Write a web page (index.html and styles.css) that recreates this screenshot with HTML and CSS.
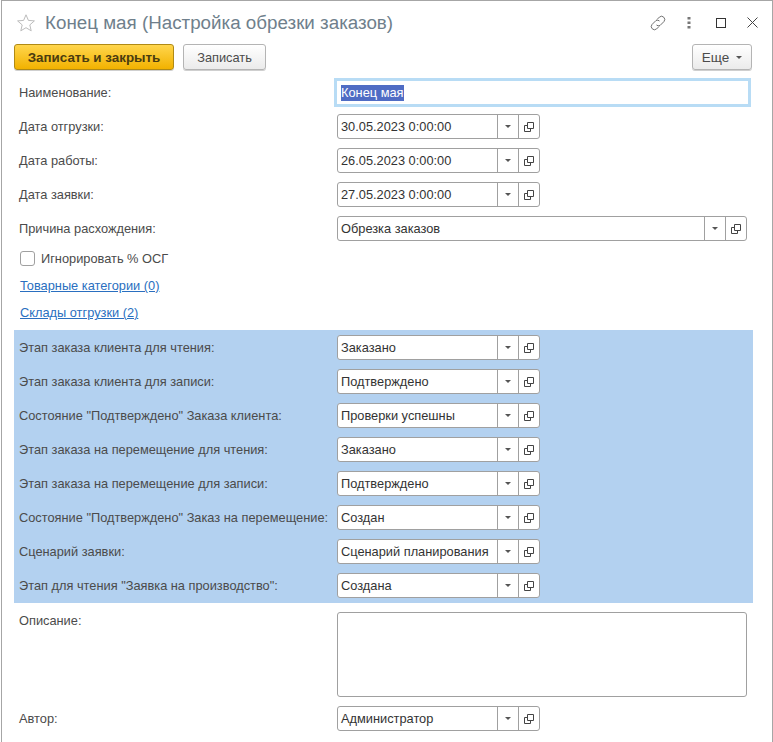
FILE: index.html
```html
<!DOCTYPE html>
<html lang="en">
<head>
    <meta charset="UTF-8">
    <title>Конец мая</title>
    <link rel="stylesheet" href="styles.css">
</head>
<body>
<svg class="defs" width="0" height="0">
    <symbol id="open" viewBox="0 0 10 10"><path d="M3.500.5h6v6h-6zM3.500 3.500h-3v6h6v-3" fill="none" stroke="#444"/></symbol>
</svg>
<div class="window">
    <div class="titlebar">
        <svg class="star" width="20" height="20" viewBox="0 0 20 20"><path d="M10 1.800l2.400 5.600 6 .5-4.600 4 1.400 5.900L10 14.700l-5.200 3.100 1.400-5.900-4.600-4 6-.5z" fill="none" stroke="#bcbcbc"/></svg>
        <span class="title">Конец мая (Настройка обрезки заказов)</span>
        <div class="winbtns">
            <svg class="ic-link" width="18" height="18" viewBox="0 0 18 18"><g fill="none" stroke="#707070"><path d="M8 5.500L10.500 3A3.200 3.200 0 0 1 15 7.500l-4 4a3.200 3.200 0 0 1-3.500-.5"/><path d="M10 12.500L7.500 15A3.200 3.200 0 0 1 3 10.500l4-4a3.200 3.200 0 0 1 3.500.5"/></g></svg>
            <svg class="ic-more" width="4" height="12" viewBox="0 0 4 12"><g fill="#777"><rect x="0.500" y="0" width="3" height="2.500"/><rect x="0.500" y="4.500" width="3" height="2.500"/><rect x="0.500" y="9" width="3" height="2.500"/></g></svg>
            <span class="ic-max"></span>
            <svg class="ic-close" width="11" height="11" viewBox="0 0 11 11"><path d="M.5.5l10 10M10.500.5l-10 10" stroke="#444" fill="none"/></svg>
        </div>
    </div>

    <div class="toolbar">
        <button class="btn btn-primary">Записать и закрыть</button>
        <button class="btn btn-save">Записать</button>
        <button class="btn btn-more">Еще<i class="caret"></i></button>
    </div>

    <div class="row row-name">
        <label>Наименование:</label>
        <div class="name-input"><span class="selected">Конец мая</span></div>
    </div>

    <div class="row"><label>Дата отгрузки:</label><div class="field"><span class="val">30.05.2023 0:00:00</span><span class="fbtn"><i class="caret"></i></span><span class="fbtn"><svg width="10" height="10"><use href="#open"/></svg></span></div></div>
    <div class="row"><label>Дата работы:</label><div class="field"><span class="val">26.05.2023 0:00:00</span><span class="fbtn"><i class="caret"></i></span><span class="fbtn"><svg width="10" height="10"><use href="#open"/></svg></span></div></div>
    <div class="row"><label>Дата заявки:</label><div class="field"><span class="val">27.05.2023 0:00:00</span><span class="fbtn"><i class="caret"></i></span><span class="fbtn"><svg width="10" height="10"><use href="#open"/></svg></span></div></div>
    <div class="row"><label>Причина расхождения:</label><div class="field field-wide"><span class="val">Обрезка заказов</span><span class="fbtn"><i class="caret"></i></span><span class="fbtn"><svg width="10" height="10"><use href="#open"/></svg></span></div></div>

    <div class="check-row"><span class="checkbox"></span><span>Игнорировать % ОСГ</span></div>
    <a class="link" href="#">Товарные категории (0)</a>
    <a class="link" href="#">Склады отгрузки (2)</a>

    <div class="band">
        <div class="row"><label>Этап заказа клиента для чтения:</label><div class="field"><span class="val">Заказано</span><span class="fbtn"><i class="caret"></i></span><span class="fbtn"><svg width="10" height="10"><use href="#open"/></svg></span></div></div>
        <div class="row"><label>Этап заказа клиента для записи:</label><div class="field"><span class="val">Подтверждено</span><span class="fbtn"><i class="caret"></i></span><span class="fbtn"><svg width="10" height="10"><use href="#open"/></svg></span></div></div>
        <div class="row"><label>Состояние "Подтверждено" Заказа клиента:</label><div class="field"><span class="val">Проверки успешны</span><span class="fbtn"><i class="caret"></i></span><span class="fbtn"><svg width="10" height="10"><use href="#open"/></svg></span></div></div>
        <div class="row"><label>Этап заказа на перемещение для чтения:</label><div class="field"><span class="val">Заказано</span><span class="fbtn"><i class="caret"></i></span><span class="fbtn"><svg width="10" height="10"><use href="#open"/></svg></span></div></div>
        <div class="row"><label>Этап заказа на перемещение для записи:</label><div class="field"><span class="val">Подтверждено</span><span class="fbtn"><i class="caret"></i></span><span class="fbtn"><svg width="10" height="10"><use href="#open"/></svg></span></div></div>
        <div class="row"><label>Состояние "Подтверждено" Заказ на перемещение:</label><div class="field"><span class="val">Создан</span><span class="fbtn"><i class="caret"></i></span><span class="fbtn"><svg width="10" height="10"><use href="#open"/></svg></span></div></div>
        <div class="row"><label>Сценарий заявки:</label><div class="field"><span class="val">Сценарий планирования</span><span class="fbtn"><i class="caret"></i></span><span class="fbtn"><svg width="10" height="10"><use href="#open"/></svg></span></div></div>
        <div class="row"><label>Этап для чтения "Заявка на производство":</label><div class="field"><span class="val">Создана</span><span class="fbtn"><i class="caret"></i></span><span class="fbtn"><svg width="10" height="10"><use href="#open"/></svg></span></div></div>
    </div>

    <div class="row row-desc"><label>Описание:</label><div class="textarea"></div></div>
    <div class="row"><label>Автор:</label><div class="field"><span class="val">Администратор</span><span class="fbtn"><i class="caret"></i></span><span class="fbtn"><svg width="10" height="10"><use href="#open"/></svg></span></div></div>
</div>
</body>
</html>
```

FILE: styles.css
```css
* {
    box-sizing: border-box;
}
html, body {
    margin: 0;
    height: 742px;
    overflow: hidden;
}
body {
    font-family: "Liberation Sans", Arial, sans-serif;
    font-size: 12.8px;
    color: #4b4b4b;
    background: #fff;
}
.defs {
    display: block;
}
.window {
    height: 742px;
    margin-left: 1px;
    padding: 0 0 0 12px;
    border: 1px solid #a6a6a6;
    border-bottom: 0;
}
.titlebar {
    display: flex;
    align-items: center;
    height: 43px;
}
.star {
    margin-left: 2px;
}
.title {
    margin-left: 9px;
    font-size: 18.8px;
    color: #6f7f8c;
}
.winbtns {
    display: flex;
    align-items: center;
    margin-left: auto;
    margin-right: 14px;
}
.ic-more {
    margin-left: 20px;
}
.ic-max {
    width: 10px;
    height: 10px;
    margin-left: 25px;
    border: 1px solid #333;
}
.ic-close {
    margin-left: 21px;
}
.toolbar {
    display: flex;
    height: 27px;
    margin-bottom: 7px;
    padding-right: 20px;
}
.btn {
    height: 26px;
    padding: 0;
    font-family: inherit;
    font-size: 12.8px;
    color: #4b4b4b;
    border: 1px solid #b4b4b4;
    border-radius: 3px;
    background: linear-gradient(#ffffff, #ebebeb);
    box-shadow: 0 1px 0 #cfcfcf;
}
.btn-primary {
    width: 160px;
    font-size: 13.4px;
    font-weight: bold;
    color: #4a3c10;
    border-color: #b08a15;
    background: linear-gradient(#ffd64d, #f2b200);
}
.btn-save {
    width: 83px;
    margin-left: 9px;
}
.btn-more {
    width: 60px;
    margin-left: auto;
    font-size: 13.5px;
}
.caret {
    display: inline-block;
    width: 0;
    height: 0;
    border-left: 3px solid transparent;
    border-right: 3px solid transparent;
    border-top: 3px solid #555;
    vertical-align: middle;
}
.btn-more .caret {
    margin-left: 7px;
}
.row {
    display: flex;
    align-items: center;
    height: 25px;
    margin-bottom: 9px;
}
.row label {
    width: 323px;
    padding-left: 5px;
    flex: none;
    white-space: nowrap;
}
.row-name {
    height: 29px;
    margin-bottom: 7px;
}
.row-name label {
    width: 320px;
}
.name-input {
    display: flex;
    align-items: center;
    width: 417px;
    height: 29px;
    padding-left: 4px;
    border: 3px solid #b8dcf5;
}
.selected {
    line-height: 16px;
    color: #fff;
    background: #4f6cc4;
}
.field {
    display: flex;
    width: 203px;
    height: 25px;
    border: 1px solid #a0a0a0;
    border-radius: 3px;
    background: #fff;
}
.field-wide {
    width: 410px;
}
.val {
    flex: 1;
    padding-left: 3px;
    line-height: 23px;
    color: #333;
    white-space: nowrap;
    overflow: hidden;
}
.fbtn {
    display: flex;
    align-items: center;
    justify-content: center;
    width: 21px;
    border-left: 1px solid #a0a0a0;
}
.check-row {
    display: flex;
    align-items: center;
    height: 16px;
    margin: 2px 0 12px 6px;
}
.checkbox {
    width: 15px;
    height: 15px;
    margin-right: 6px;
    border: 1px solid #a0a0a0;
    border-radius: 3px;
}
.link {
    display: block;
    width: max-content;
    height: 15px;
    margin: 0 0 12px 6px;
    color: #2a6fc0;
}
.band {
    width: 739px;
    height: 273px;
    margin-top: -2px;
    padding-top: 5px;
    background: #b3d1f0;
}
.row-desc {
    align-items: flex-start;
    height: 85px;
    margin-top: 9px;
}
.row-desc label {
    padding-top: 1px;
}
.textarea {
    width: 410px;
    height: 85px;
    border: 1px solid #a0a0a0;
    border-radius: 3px;
}
```
